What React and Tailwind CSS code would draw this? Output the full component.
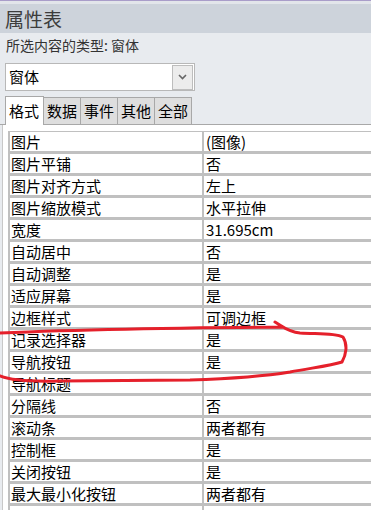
import React from "react";

const rows = [
  ["图片", "(图像)"],
  ["图片平铺", "否"],
  ["图片对齐方式", "左上"],
  ["图片缩放模式", "水平拉伸"],
  ["宽度", "31.695cm"],
  ["自动居中", "否"],
  ["自动调整", "是"],
  ["适应屏幕", "是"],
  ["边框样式", "可调边框"],
  ["记录选择器", "是"],
  ["导航按钮", "是"],
  ["导航标题", ""],
  ["分隔线", "否"],
  ["滚动条", "两者都有"],
  ["控制框", "是"],
  ["关闭按钮", "是"],
  ["最大最小化按钮", "两者都有"],
  ["", ""],
];

const tabs = ["数据", "事件", "其他", "全部"];

const App = () => {
  return (
    <div className="relative w-[371px] h-[510px] overflow-hidden bg-[#e8ebef] font-['Noto_Sans_CJK_SC',sans-serif] text-black">
      {/* title bar */}
      <div className="h-px bg-[#a99dc9]" />
      <div className="h-[3px] bg-[#e2e5ea]" />
      <div className="h-[29px] bg-[#cdd3db] pl-[5px] text-[19px] leading-[29px] text-[#3c3c3c]">
        属性表
      </div>

      <div className="h-[23px] pl-[6px] pt-[1px] text-[14px] leading-[22px] text-[#333]">
        所选内容的类型: 窗体
      </div>

      {/* selector */}
      <div className="ml-[5px] mt-[7px] flex h-[28px] w-[190px] items-center border border-[#b8b8b8] bg-white">
        <span className="flex-1 pl-[3px] text-[15px] leading-[26px]">窗体</span>
        <div className="mr-px flex h-[25px] w-[21px] items-center justify-center border border-[#bdbdbd] bg-[#ececec]">
          <svg width="9" height="6" viewBox="0 0 9 6">
            <path d="M1 1 L4.5 4.5 L8 1" fill="none" stroke="#666" strokeWidth="1.6" />
          </svg>
        </div>
      </div>

      {/* tabs */}
      <div className="mt-[5px] flex h-[29px] items-end border-b border-[#a8a8a8] pl-[5px]">
        <div className="-mb-px h-[29px] w-[39px] border border-b-0 border-[#a8a8a8] bg-white pl-[3px] text-[15px] leading-[27px]">
          格式
        </div>
        {tabs.map((t) => (
          <div
            key={t}
            className="h-[27px] w-[37px] border border-l-0 border-b-0 border-[#a8a8a8] bg-[#dedede] text-center text-[15px] leading-[26px]"
          >
            {t}
          </div>
        ))}
      </div>

      {/* property grid */}
      <div className="h-[400px] border-l border-[#c8c8c8] bg-white pl-[5px] pt-[6px] ml-[2px]">
        <div className="flex flex-col gap-[3px] border-t border-l-2 border-[#c0c0c0] bg-[#c0c0c0]">
          {rows.map(([k, v], i) => (
            <div key={i} className="flex h-[19px] gap-[2px] text-[15px] leading-[19px]">
              <div className="w-[192px] shrink-0 bg-white pl-px">{k}</div>
              <div className="flex-1 bg-white pl-[2px]">{v}</div>
            </div>
          ))}
        </div>
      </div>

      {/* red annotation */}
      <svg className="pointer-events-none absolute left-0 top-0" width="371" height="510">
        <path
          d="M0 333 C70 330 150 328 283 327 M275 322 C282 326 288 332 300 333 C320 334 335 333 343 337 C348 345 346 355 342 362 C330 366 310 368 290 372 C260 377 220 379 190 380 L60 381 C30 382 10 380 0 376"
          fill="none"
          stroke="#e5202b"
          strokeWidth="3"
          strokeLinecap="round"
          strokeLinejoin="round"
        />
      </svg>
    </div>
  );
};

export default App;
